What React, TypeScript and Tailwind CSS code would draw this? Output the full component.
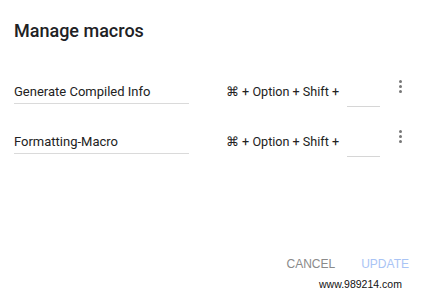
import React from "react";

function Kebab() {
  return (
    <div className="flex w-[6px] flex-col items-center gap-[2px]">
      <div className="h-[3px] w-[3px] rounded-full bg-[#777]" />
      <div className="h-[3px] w-[3px] rounded-full bg-[#777]" />
      <div className="h-[3px] w-[3px] rounded-full bg-[#777]" />
    </div>
  );
}

function Row({ name }: { name: string }) {
  return (
    <div className="flex h-[50px] items-start">
      <div className="w-[175px] border-b border-[#dadada] pb-[1px] pt-[6px] text-[13px] text-[#222]">
        {name}
      </div>
      <div className="ml-[37px] pt-[7px] text-[12.6px] text-[#222]">⌘ + Option + Shift +</div>
      <div className="ml-[8px] mt-[30px] h-[1px] w-[33px] bg-[#d6d6d6]" />
      <div className="ml-[17px] mt-[4px]">
        <Kebab />
      </div>
    </div>
  );
}

export default function App() {
  return (
    <div className="relative h-[291px] w-[426px] bg-white font-['Roboto',sans-serif]">
      <div className="px-[14px] pt-[17px]">
        <div className="text-[18px] font-medium text-[#202124]">Manage macros</div>
        <div className="mt-[32px] flex flex-col">
          <Row name="Generate Compiled Info" />
          <Row name="Formatting-Macro" />
        </div>
      </div>
      <div className="absolute right-[17px] top-[255px] flex gap-[26px] font-['Liberation_Sans',sans-serif] text-[12px]">
        <span className="text-[#8a8a8a]">CANCEL</span>
        <span className="text-[#a9c4f5]">UPDATE</span>
      </div>
      <div className="absolute left-[319px] top-[277px] font-['Liberation_Sans',sans-serif] text-[10.5px] text-[#111]">
        www.989214.com
      </div>
    </div>
  );
}
